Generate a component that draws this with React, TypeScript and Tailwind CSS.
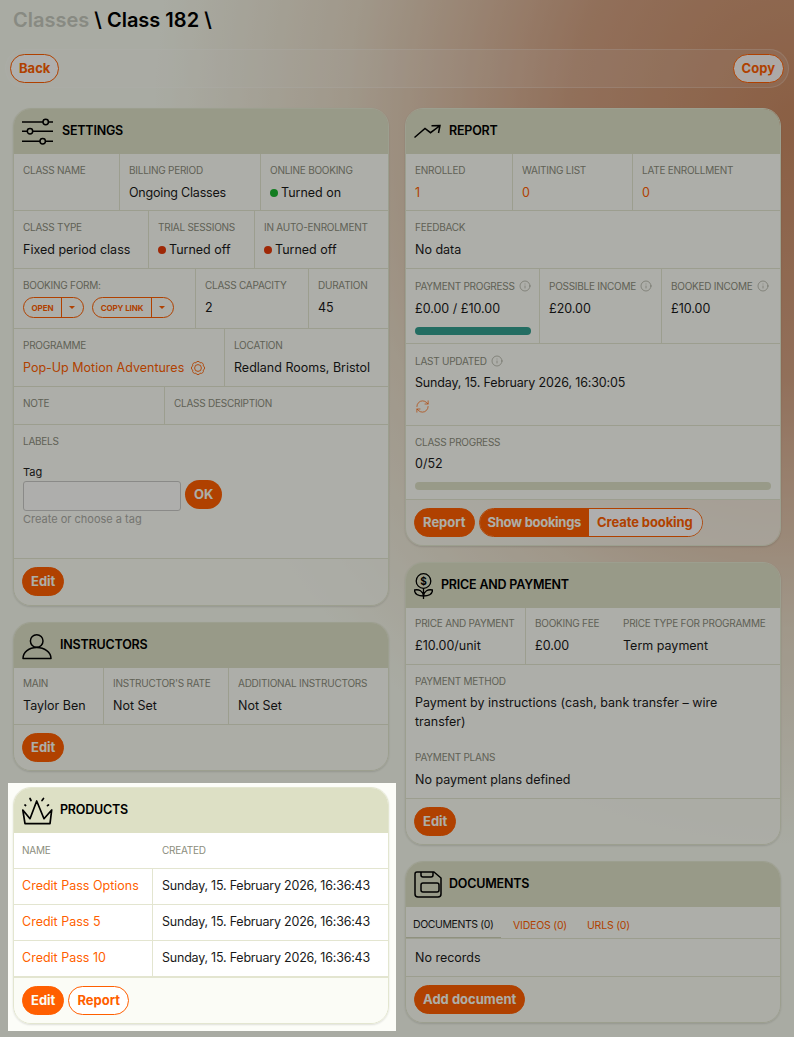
import { Info, RefreshCw } from "lucide-react";
import type { ReactNode } from "react";

const labelCls = "block whitespace-nowrap text-[10px] leading-[14px] uppercase text-[#8b8d7c] tracking-[-0.25px]";
const infoLabelCls = "block whitespace-nowrap text-[10px] h-[16px] leading-[16px] uppercase text-[#8b8d7c] tracking-[-0.25px]";
const valueBase = "block text-[12.5px] leading-[20px] text-[#1a1a1a]";
const valueCls = `${valueBase} mt-[6px]`;
const infoValueCls = `${valueBase} mt-[5px]`;
const cellBorder = "border-r border-[#e3e5d0]";

const InfoIcon = () => <Info className="inline w-[12px] h-[12px] ml-[4px] -mt-[2px]" strokeWidth={1.1} />;

const Field = ({ label, children, className, info, compact }: { label: string; children?: ReactNode; className?: string; info?: boolean; compact?: boolean }) => (
  <div className={`px-[9px] ${compact ? "py-[8px]" : "py-[9px]"} ${className ?? cellBorder}`}>
    <span className={info ? infoLabelCls : labelCls}>
      {label}
      {info && <InfoIcon />}
    </span>
    {children && <span className={info ? infoValueCls : valueCls}>{children}</span>}
  </div>
);

const Row = ({ children, className }: { children: ReactNode; className?: string }) => (
  <div className={`flex bg-[#fbfcf5] border-b border-[#e3e5d0] ${className ?? ""}`}>{children}</div>
);

const Dot = ({ color }: { color: string }) => (
  <span className={`inline-block w-2 h-2 rounded-full mr-[3px] ${color}`} />
);

const Btn = ({ children, outline }: { children: ReactNode; outline?: boolean }) => (
  <span
    className={`inline-flex items-center h-[29px] px-[8px] rounded-full text-[13px] font-bold border border-[#ff5f00] ${
      outline ? "bg-white/90 text-[#ff5f00]" : "bg-[#ff5f00] text-[#fbfcf3]"
    }`}
  >
    {children}
  </span>
);

const Card = ({ title, icon, gap, children }: { title: string; icon: ReactNode; gap: string; children: ReactNode }) => (
  <div className="rounded-[18px] border border-[#e3e6d0] shadow-[0_1px_2px_rgba(0,0,0,0.12)] overflow-hidden">
    <div className={`h-[45px] bg-[#dde0c5] flex items-center pl-[8px] text-[12.500px] tracking-[-0.2px] font-semibold text-black ${gap}`}>
      {icon}
      {title}
    </div>
    {children}
  </div>
);

const Footer = ({ children, bottom }: { children: ReactNode; bottom?: string }) => (
  <div className={`flex gap-[4px] px-[8px] pt-[8px] bg-[#fbfcf5]/65 ${bottom ?? "pb-[8px]"}`}>{children}</div>
);

const SplitBtn = ({ label, width }: { label: string; width: string }) => (
  <span className="inline-flex items-center h-[21px] rounded-full border border-[#ff5f00] text-[#ff5f00] text-[8px] tracking-[-0.1px] font-bold uppercase">
    <span className={`h-full flex items-center justify-center border-r border-[#ff5f00] ${width}`}>{label}</span>
    <span className="w-[21px] flex justify-center pr-[2px]">
      <span className="w-0 h-0 border-x-[3px] border-x-transparent border-t-[3px] border-t-[#ff5f00]" />
    </span>
  </span>
);

const SlidersIcon = () => (
  <svg viewBox="0 0 31 27" className="w-[31px] h-[27px]" fill="none" stroke="black" strokeWidth="1.5">
    <path d="M0 4h21M26.500 4h4.500M0 13.300h5M11 13.300h20M0 23.300h18M24 23.300h7" />
    <circle cx="23.700" cy="4" r="2.700" />
    <circle cx="8" cy="13.300" r="2.700" />
    <circle cx="20.700" cy="23.300" r="2.700" />
  </svg>
);

const TrendIcon = () => (
  <svg viewBox="0 0 27 15" className="w-[27px] h-[15px]" fill="none" stroke="black" strokeWidth="1.5">
    <path d="M0.500 13.500L11 4.500l5.500 4.200L25.500 2M17.500 1.800L26 1.500L24.500 9" />
  </svg>
);

const UserIcon = () => (
  <svg viewBox="0 0 30 28" className="w-[30px] h-[28px]" fill="none" stroke="black" strokeWidth="1.5" strokeLinejoin="round">
    <circle cx="14.700" cy="9" r="6.300" />
    <path d="M1 26.500C1 20 7 15.500 14.700 15.500S29 20 29 26.500z" />
  </svg>
);

const CrownIcon = () => (
  <svg viewBox="0 0 31 28" className="w-[31px] h-[28px]" fill="none" stroke="black" strokeWidth="1.7" strokeLinecap="round" strokeLinejoin="round">
    <path d="M0.800 13L8 21.700L14.700 4L22 21.700L29.700 13L28 26.700H3z" />
    <path d="M8 1.500l1 2M21.500 1.500l-1.500 2M3 8l.6.5M26.500 8l-1 .5" />
  </svg>
);

const FlowerIcon = () => (
  <svg viewBox="0 0 19 26" className="w-[19px] h-[26px]" fill="none" stroke="black" strokeWidth="1.300" strokeLinejoin="round">
    <circle cx="9.500" cy="8" r="7.300" />
    <path d="M9.500 15.300V26M9.500 23C4 23 .5 21 .5 17C5 16 9 18 9.500 23zM9.500 23C15 23 18.500 21 18.500 17C14 16 10 18 9.500 23z" />
    <text x="9.500" y="11.500" textAnchor="middle" fontSize="10" fontWeight="700" fill="black" stroke="none">$</text>
  </svg>
);

const SaveIcon = () => (
  <svg viewBox="0 0 28 27" className="w-[28px] h-[27px]" fill="none" stroke="black" strokeWidth="1.500" strokeLinejoin="round">
    <path d="M3 1H20L27 7V23a3 3 0 0 1-3 3H4a3 3 0 0 1-3-3V3a2 2 0 0 1 2-2z" />
    <path d="M7 1v3a2 2 0 0 0 2 2h8a2 2 0 0 0 2-2V1" />
    <rect x="7" y="12" width="18" height="9" rx="2" />
  </svg>
);

const GearIcon = () => (
  <svg viewBox="0 0 14 14" className="w-[14px] h-[14px]" fill="none" stroke="#ff5f00" strokeWidth="0.9">
    <path d="M12.170 9.140A2.300 2.300 0 0 1 9.140 12.170A2.300 2.300 0 0 1 4.860 12.170A2.300 2.300 0 0 1 1.830 9.140A2.300 2.300 0 0 1 1.830 4.860A2.300 2.300 0 0 1 4.860 1.830A2.300 2.300 0 0 1 9.140 1.830A2.300 2.300 0 0 1 12.170 4.860A2.300 2.300 0 0 1 12.170 9.140z" />
    <circle cx="7" cy="7" r="3.400" />
  </svg>
);

export default function App() {
  return (
    <div className="relative w-[794px] h-[1037px] overflow-hidden bg-[radial-gradient(ellipse_640px_720px_at_100%_12%,#c98a63_0%,#d3a283_35%,#e8dcc8_70%,#f5f8ec_100%)] font-['Inter','Liberation_Sans',sans-serif]">
      <h1 className="pl-[13px] pt-[7px] h-[49px] text-[20px] leading-[26px] font-semibold text-black">
        <span className="text-[#c5c8bd]">Classes</span> \ Class 182 \
      </h1>
      <div className="mx-[5px] h-[39px] rounded-full border border-white/20 bg-white/10 flex items-center justify-between px-[4px]">
        <Btn outline>Back</Btn>
        <Btn outline>Copy</Btn>
      </div>
      <div className="grid grid-cols-[376px_376px] gap-x-[16px] pl-[13px] pt-[20px]">
        <div className="flex flex-col gap-[16px]">
          <Card title="SETTINGS" icon={<SlidersIcon />} gap="gap-[9px]">
            <Row className="h-[57px]">
              <Field label="Class name" className={`w-[106px] ${cellBorder}`} />
              <Field label="Billing period" className={`w-[141px] ${cellBorder}`}>
                <span className="tracking-[-0.2px]">Ongoing Classes</span>
              </Field>
              <Field label="Online booking" className="flex-1"><Dot color="bg-[#1bb52f]" />Turned on</Field>
            </Row>
            <Row className="h-[58px]">
              <Field label="Class type" className={`w-[135px] ${cellBorder}`}>Fixed period class</Field>
              <Field label="Trial sessions" className={`w-[106px] ${cellBorder}`}><Dot color="bg-[#e63a0a]" />Turned off</Field>
              <Field label="In auto-enrolment" className="flex-1"><Dot color="bg-[#e63a0a]" />Turned off</Field>
            </Row>
            <Row className="h-[60px]">
              <div className={`w-[182px] px-[9px] py-[9px] ${cellBorder}`}>
                <span className={labelCls}>Booking form:</span>
                <div className="flex gap-[8px] mt-[5px]">
                  <SplitBtn label="Open" width="w-[38px]" />
                  <SplitBtn label="Copy link" width="w-[59px]" />
                </div>
              </div>
              <Field label="Class capacity" className={`w-[113px] ${cellBorder}`}>2</Field>
              <Field label="Duration" className="flex-1">45</Field>
            </Row>
            <Row className="h-[58px]">
              <div className={`w-[211px] px-[9px] py-[9px] ${cellBorder}`}>
                <span className={labelCls}>Programme</span>
                <span className="flex items-center gap-[7px] mt-[6px] text-[12.5px] leading-[20px] text-[#ff5f00]">
                  Pop-Up Motion Adventures <GearIcon />
                </span>
              </div>
              <Field label="Location" className="flex-1">Redland Rooms, Bristol</Field>
            </Row>
            <Row className="h-[38px]">
              <Field label="Note" className={`w-[151px] ${cellBorder}`} />
              <Field label="Class description" className="flex-1" />
            </Row>
            <div className="h-[134px] bg-[#fbfcf5] border-b border-[#e3e5d0] px-[9px] py-[9px]">
              <span className={labelCls}>Labels</span>
              <div className="mt-[17px] text-[11px] leading-[14px] text-[#222]">Tag</div>
              <div className="flex items-start gap-[4px] mt-[2px]">
                <div className="w-[158px] h-[30px] rounded-[3px] border border-[#c9c9c6] bg-white/40" />
                <span className="inline-flex items-center h-[29px] -mt-[1px] px-[9px] rounded-full text-[13px] font-bold bg-[#ff5f00] text-[#fbfcf3]">OK</span>
              </div>
              <div className="text-[11px] leading-[14px] mt-[1px] text-[#a9aaa3]">Create or choose a tag</div>
            </div>
            <Footer bottom="pb-[9px]"><Btn>Edit</Btn></Footer>
          </Card>
          <Card title="INSTRUCTORS" icon={<UserIcon />} gap="gap-[8px]">
            <Row className="h-[57px]">
              <Field compact label="Main" className={`w-[90px] ${cellBorder}`}>Taylor Ben</Field>
              <Field compact label="Instructor's rate" className={`w-[125px] ${cellBorder}`}>Not Set</Field>
              <Field compact label="Additional instructors" className="flex-1">Not Set</Field>
            </Row>
            <Footer><Btn>Edit</Btn></Footer>
          </Card>
          <div className="relative z-10 -mt-[4px] -ml-[5px] -mr-[7px] pl-[5px] pr-[7px] pt-[4px] pb-[7px] bg-[#fcfdf8] shadow-[0_0_0_2000px_rgba(0,0,0,0.31)]">
            <Card title="PRODUCTS" icon={<CrownIcon />} gap="gap-[7px]">
              <div className="bg-white border-b border-[#e3e5d0]">
                <div className="flex h-[36px] border-b border-[#e3e5d0] items-center text-[10px] tracking-[-0.25px] uppercase text-[#8b8d7c]">
                  <span className="w-[139px] pl-[8px]">Name</span>
                  <span className="pl-[9px]">Created</span>
                </div>
                {["Credit Pass Options", "Credit Pass 5", "Credit Pass 10"].map((name) => (
                  <div key={name} className="flex h-[36px] border-b border-[#e3e5d0] items-center text-[12.5px]">
                    <span className={`w-[139px] h-full pl-[8px] flex items-center text-[#ff5f00] ${cellBorder}`}>{name}</span>
                    <span className="pl-[9px] tracking-[-0.22px] text-[#1a1a1a]">Sunday, 15. February 2026, 16:36:43</span>
                  </div>
                ))}
              </div>
              <Footer>
                <Btn>Edit</Btn>
                <Btn outline>Report</Btn>
              </Footer>
            </Card>
          </div>
        </div>
        <div className="flex flex-col gap-[16px]">
          <Card title="REPORT" icon={<TrendIcon />} gap="gap-[8px]">
            <Row className="h-[57px]">
              <Field label="Enrolled" className={`w-[107px] ${cellBorder}`}><span className="text-[#ff5f00]">1</span></Field>
              <Field label="Waiting list" className={`w-[120px] ${cellBorder}`}><span className="text-[#ff5f00]">0</span></Field>
              <Field label="Late enrollment" className="flex-1"><span className="text-[#ff5f00]">0</span></Field>
            </Row>
            <Row className="h-[58px]"><Field label="Feedback" className="flex-1">No data</Field></Row>
            <Row className="h-[75px]">
              <div className={`w-[134px] px-[9px] py-[9px] ${cellBorder}`}>
                <span className={infoLabelCls}>Payment progress<InfoIcon /></span>
                <span className={infoValueCls}>£0.00 / £10.00</span>
                <div className="h-[8px] rounded-full bg-[#349e8e] mt-[8px] -mr-[1px]" />
              </div>
              <Field label="Possible income" info className={`w-[122px] ${cellBorder}`}>£20.00</Field>
              <Field label="Booked income" info className="flex-1">£10.00</Field>
            </Row>
            <Row className="h-[82px]">
              <div className="px-[9px] py-[9px]">
                <span className={infoLabelCls}>Last updated<InfoIcon /></span>
                <span className={`${valueBase} mt-[4px] tracking-[-0.15px]`}>Sunday, 15. February 2026, 16:30:05</span>
                <RefreshCw className="w-[15px] h-[15px] mt-[6px] text-[#ff5f00]" strokeWidth={1.1} />
              </div>
            </Row>
            <Row className="h-[74px]">
              <div className="w-full px-[9px] py-[9px]">
                <span className={labelCls}>Class progress</span>
                <span className={infoValueCls}>0/52</span>
                <div className="h-[8px] rounded-full bg-[#dde0c5] mt-[8px]" />
              </div>
            </Row>
            <Footer>
              <Btn>Report</Btn>
              <span className="inline-flex h-[29px] rounded-full border border-[#ff5f00] overflow-hidden text-[13px] font-bold">
                <span className="px-[8px] flex items-center tracking-[-0.3px] bg-[#ff5f00] text-[#fbfcf3]">Show bookings</span>
                <span className="pl-[8px] pr-[9px] flex items-center tracking-[-0.1px] bg-white/90 text-[#ff5f00]">Create booking</span>
              </span>
            </Footer>
          </Card>
          <Card title="PRICE AND PAYMENT" icon={<FlowerIcon />} gap="gap-[8px]">
            <Row className="h-[57px]">
              <Field compact label="Price and payment" className={`w-[120px] ${cellBorder}`}>£10.00/unit</Field>
              <Field compact label="Booking fee" className="w-[88px]">£0.00</Field>
              <Field compact label="Price type for programme" className="flex-1">Term payment</Field>
            </Row>
            <Row className="h-[134px]">
              <div className="px-[9px] py-[9px]">
                <span className={labelCls}>Payment method</span>
                <span className="block text-[12.5px] leading-[19px] mt-[5px] text-[#1a1a1a]">Payment by instructions (cash, bank transfer – wire transfer)</span>
                <span className={`${labelCls} mt-[19px]`}>Payment plans</span>
                <span className={valueCls}>No payment plans defined</span>
              </div>
            </Row>
            <Footer><Btn>Edit</Btn></Footer>
          </Card>
          <Card title="DOCUMENTS" icon={<SaveIcon />} gap="gap-[7px]">
            <div className="flex h-[32px] pt-[6px] bg-[#fbfcf5] border-b border-[#e3e5d0] text-[10.500px] tracking-[-0.2px] items-center">
              <span className="w-[95px] h-full flex items-center pl-[7px] tracking-[-0.4px] text-[#1a1a1a] border-b border-[#cfd2b8]">DOCUMENTS (0)</span>
              <span className="ml-[12px] text-[#ff5f00]">VIDEOS (0)</span>
              <span className="ml-[20px] text-[#ff5f00]">URLS (0)</span>
            </div>
            <div className="h-[38px] pt-[2px] bg-[#fbfcf5] border-b border-[#e3e5d0] flex items-center px-[9px] text-[12.5px] text-[#1a1a1a]">No records</div>
            <Footer><Btn>Add document</Btn></Footer>
          </Card>
        </div>
      </div>
    </div>
  );
}
